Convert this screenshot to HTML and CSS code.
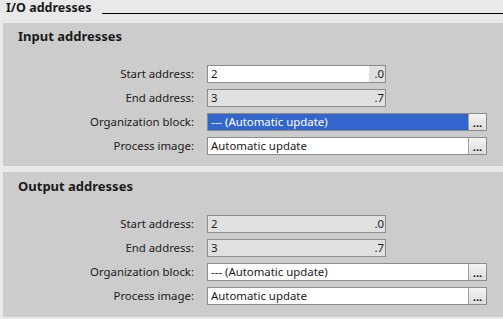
FILE: index.html
```html
<!DOCTYPE html>
<html lang="en">
<head>
  <meta charset="UTF-8" />
  <title>I/O addresses</title>
  <link rel="stylesheet" href="styles.css">
</head>
<body>

  <div class="section-title">
    <span>I/O addresses</span>
    <div class="rule"></div>
  </div>

  <div class="panel">
    <h3>Input addresses</h3>
    <div class="form">
      <label>Start address:</label>
      <div class="addr">
        <span class="val editable">2</span>
        <span class="bit">.0</span>
      </div>

      <label>End address:</label>
      <div class="addr">
        <span class="val">3</span>
        <span class="bit">.7</span>
      </div>

      <label>Organization block:</label>
      <div class="select selected">
        <span class="val">--- (Automatic update)</span>
        <span class="dots">...</span>
      </div>

      <label>Process image:</label>
      <div class="select">
        <span class="val">Automatic update</span>
        <span class="dots">...</span>
      </div>
    </div>
  </div>

  <div class="panel output">
    <h3>Output addresses</h3>
    <div class="form">
      <label>Start address:</label>
      <div class="addr">
        <span class="val">2</span>
        <span class="bit">.0</span>
      </div>

      <label>End address:</label>
      <div class="addr">
        <span class="val">3</span>
        <span class="bit">.7</span>
      </div>

      <label>Organization block:</label>
      <div class="select">
        <span class="val">--- (Automatic update)</span>
        <span class="dots">...</span>
      </div>

      <label>Process image:</label>
      <div class="select">
        <span class="val">Automatic update</span>
        <span class="dots">...</span>
      </div>
    </div>
  </div>

</body>
</html>
```

FILE: styles.css
```css
body {
  margin: 0;
  font-family: "Noto Sans", "DejaVu Sans", sans-serif;
  font-size: 11.4px;
  background-color: #e9e9e9;
  color: #1a1a1a;
}
.section-title {
  display: flex;
  align-items: flex-start;
  height: 14px;
  padding: 0 0 0 6px;
  margin-bottom: 9px;
  font-weight: bold;
  font-size: 12.5px;
}
.section-title span {
  line-height: 16px;
}
.rule {
  flex: 1;
  height: 13px;
  margin-left: 10px;
  border-bottom: 1px solid #000;
}
.panel {
  margin-left: 3px;
  background-color: #cccccc;
  padding: 5px 0 11px 0;
  margin-bottom: 6px;
}
.panel.output {
  padding: 6px 0 12px 0;
}
h3 {
  margin: 0 0 21px 15px;
  font-size: 13px;
  font-weight: bold;
  line-height: 16px;
}
.form {
  display: grid;
  grid-template-columns: 191px 280px;
  column-gap: 13px;
  row-gap: 6px;
}
label {
  text-align: right;
  line-height: 18px;
}
.addr, .select {
  display: flex;
  height: 16px;
  border: 1px solid #8c8c8c;
  line-height: 16px;
  background-color: #e0e0e0;
}
.addr {
  width: 177px;
}
.val {
  flex: 1;
  padding-left: 3px;
}
.editable {
  background-color: #fff;
}
.bit {
  width: 15px;
  text-align: right;
  padding-right: 1px;
}
.select {
  background-color: #fff;
}
.selected .val {
  background-color: #3366cc;
  color: #fff;
}
.dots {
  width: 17px;
  border-left: 1px solid #a0a0a0;
  background: linear-gradient(#f4f4f4, #dcdcdc);
  text-align: center;
  font-weight: bold;
  line-height: 18px;
}
```
